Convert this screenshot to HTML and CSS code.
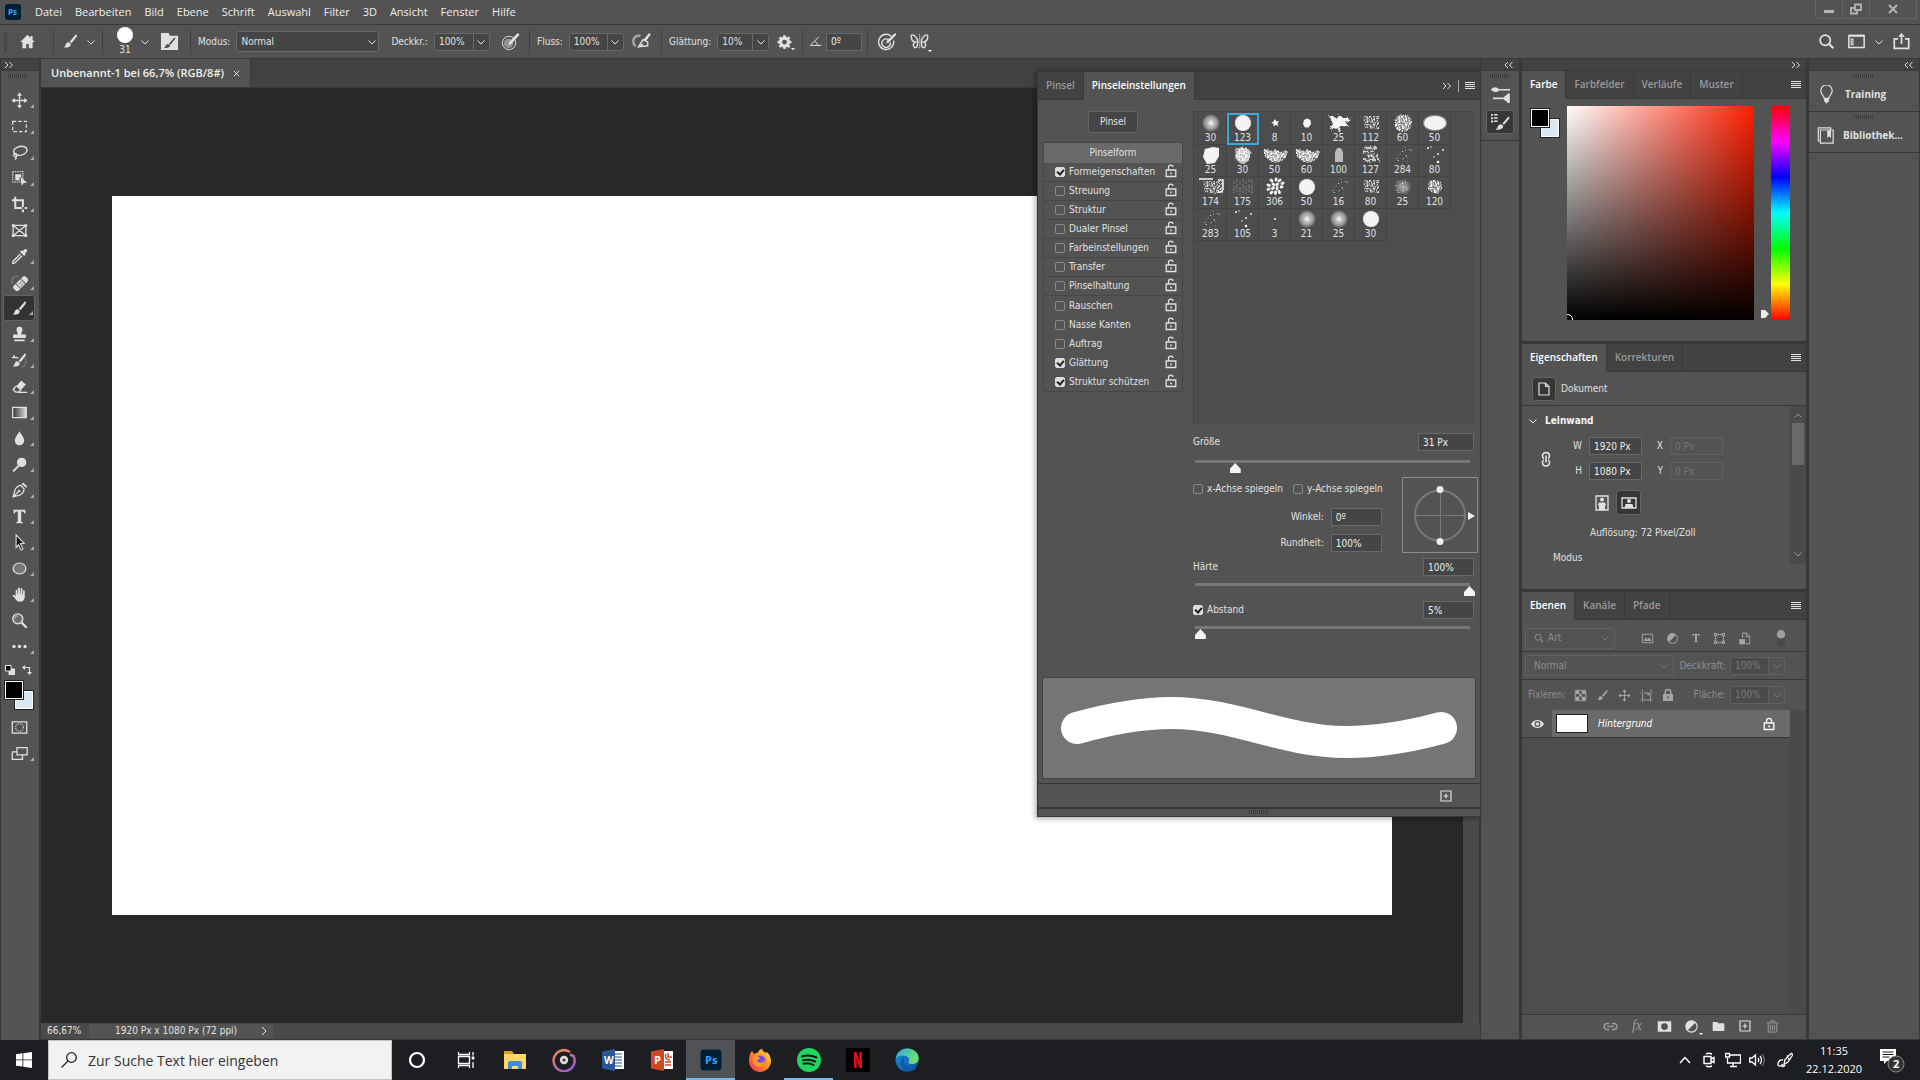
FILE: index.html
```html
<!DOCTYPE html>
<html lang="de">
<head>
  <meta charset="UTF-8">
  <title>Unbenannt-1 bei 66,7% (RGB/8#)</title>
  <meta name="viewport" content="width=device-width, initial-scale=1.0">
  <link rel="stylesheet" href="styles.css">
</head>
<body>
  <svg class="sprite" aria-hidden="true">
    <defs>
      <filter id="grain" x="-10%" y="-10%" width="120%" height="120%">
        <feTurbulence type="fractalNoise" baseFrequency=".6" numOctaves="2" seed="4"/>
        <feColorMatrix values="0 0 0 0 1  0 0 0 0 1  0 0 0 0 1  0 5 0 0 -2.1"/>
        <feComposite in2="SourceGraphic" operator="in"/>
      </filter>
      <filter id="specks" x="-10%" y="-10%" width="120%" height="120%">
        <feTurbulence type="fractalNoise" baseFrequency=".6" numOctaves="1" seed="9"/>
        <feColorMatrix values="0 0 0 0 1  0 0 0 0 1  0 0 0 0 1  0 7 0 0 -4.300"/>
        <feComposite in2="SourceGraphic" operator="in"/>
      </filter>
      <filter id="rough" x="-20%" y="-20%" width="140%" height="140%">
        <feTurbulence type="fractalNoise" baseFrequency=".3" numOctaves="2" seed="2"/>
        <feDisplacementMap in="SourceGraphic" scale="5"/>
      </filter>
      <radialGradient id="softDot"><stop offset="0" stop-color="#fff"/><stop offset=".4" stop-color="#b4b4b4"/><stop offset="1" stop-color="#fff" stop-opacity="0"/></radialGradient>
      <linearGradient id="ramp"><stop offset="0" stop-color="#333"/><stop offset="1" stop-color="#ddd"/></linearGradient>
      <linearGradient id="grooveRing" x2=".6" y2="1"><stop offset="0" stop-color="#f58a4b"/><stop offset="1" stop-color="#a05cc8"/></linearGradient>
      <linearGradient id="foxBody" x1="1" x2="0" y2="1"><stop offset="0" stop-color="#ffe84a"/><stop offset=".5" stop-color="#ff8a1e"/><stop offset="1" stop-color="#f0256c"/></linearGradient>
      <linearGradient id="edgeTop" y2=".4"><stop offset="0" stop-color="#2fa9e8"/><stop offset="1" stop-color="#6be06a"/></linearGradient>
      <linearGradient id="edgeLow" y2="1"><stop offset="0" stop-color="#1a8fd8"/><stop offset="1" stop-color="#0c4fa0"/></linearGradient>
    </defs>

    <symbol id="chev" viewBox="0 0 10 10"><path class="ln" d="M1.500 3.500 5 7l3.500-3.500"/></symbol>
    <symbol id="menu" viewBox="0 0 10 10"><path class="ln" d="M0 1.500h10M0 3.500h10M0 5.500h10M0 7.500h10" shape-rendering="crispEdges"/></symbol>
    <symbol id="dbl-right" viewBox="0 0 10 10"><path class="ln" d="m1 2 3 3-3 3M5.500 2l3 3-3 3"/></symbol>
    <symbol id="dbl-left" viewBox="0 0 10 10"><path class="ln" d="M4 2 1 5l3 3M8.500 2l-3 3 3 3"/></symbol>
    <symbol id="brush" viewBox="0 0 20 20"><path d="M17 2c1 .6.6 1.700 0 2.600L11.200 12 9 10.200l6-7c.6-.7 1.300-1.600 2-1.200z"/><path d="m8 11 2.300 1.900c.2 2.400-1.700 4.300-6.300 4.200-.9 0-1.700-.3-2-.7 1.600-.4 2-1.400 2.300-2.700C4.700 11.800 6.300 10.600 8 11z"/></symbol>
    <symbol id="home" viewBox="0 0 20 20"><path d="M10 2 1.500 10.500H4V18h4.500v-5h3v5H16v-7.500h2.500L16 8V3.500h-2.500v2z"/></symbol>
    <symbol id="brush-panel" viewBox="0 0 20 20"><path fill-rule="evenodd" d="M1 1h8l1.500 3H19v15H1zM16 6c-.6-.3-1 0-1.500.6L9.500 12l1.700 1.400 4.700-6c.4-.6.600-1.100.1-1.400zM8.800 12.600c-1.500-.3-2.600.8-2.900 2-.2.900-.5 1.600-1.900 2 3.500.9 6.600 0 6.600-2.600z"/></symbol>
    <symbol id="pen-pressure" viewBox="0 0 20 20"><circle class="ln" cx="8.500" cy="11.500" r="7"/><circle cx="8" cy="12" r="5" opacity=".45"/><path d="m17.500 1 2 2-8.700 9.500-3.300 1.300 1.200-3.400z"/></symbol>
    <symbol id="airbrush" viewBox="0 0 20 20"><path class="ln" stroke-width="2.500" d="M9 4C0 3 0 12 4 15" opacity=".6"/><path class="ln" stroke-width="1.500" d="m7 15.500 4.500-7.500 5 2.500v4zM15 8l3-5"/><path d="m18 1 1.800 1.500-6 7.500-2-1.500zM5 17l6-5 1 2z"/></symbol>
    <symbol id="gear" viewBox="0 0 20 20"><path fill-rule="evenodd" d="M8.500 1.500h3l.5 2.300 1.500.7 2-1.300 2.200 2.100-1.400 2.100.6 1.400 2.300.5v3l-2.300.5-.7 1.500 1.400 2-2.100 2.200-2-1.400-1.500.6-.5 2.300h-3L8 17.700l-1.500-.7-2 1.400-2.100-2.200 1.300-2-.6-1.400-2.300-.5v-3l2.300-.5.600-1.500-1.300-2 2.100-2.100 2 1.300L8 3.800zM10 7.500a3.200 3.200 0 1 0 0 6.500 3.200 3.200 0 0 0 0-6.500z"/></symbol>
    <symbol id="angle" viewBox="0 0 20 20"><path class="ln" stroke-width="1.500" d="M15 3 2 16h17M8 10c3 0 5 3 5 6"/></symbol>
    <symbol id="target" viewBox="0 0 20 20"><g class="ln" stroke-width="1.500"><path d="M14 4.500A8 8 0 1 0 16.500 9"/><path d="M11 8a4.500 4.500 0 1 0 2 3"/></g><path d="m18 1 1.500 1.500-8 8.500-3 1 1-3z"/></symbol>
    <symbol id="butterfly" viewBox="0 0 20 20"><g class="ln" stroke-width="1.500"><path d="M8 9C7 5 3 2 1.500 3.500c-.5 4 1 6.500 4 7C2 12 4 17 6 16.500S8 13 8 11zM12 9c1-4 5-7 6.500-5.500.5 4-1 6.500-4 7 3.500 1.500 1.500 6.500-.5 6s-2-3.500-2-5.500z"/><path stroke-dasharray="1 1" d="M10 2v16"/></g></symbol>
    <symbol id="search" viewBox="0 0 20 20"><circle class="ln" stroke-width="2" cx="8.500" cy="8.500" r="6"/><path class="ln" stroke-width="2.500" d="m13 13 5 5"/></symbol>
    <symbol id="workspace" viewBox="0 0 20 20"><path class="ln" stroke-width="1.800" d="M1 3h18v14H1z"/><path d="M1 2h18v2.500H1zM3 6.500h3.500v8H3z"/><path d="M4 8h1.500v1H4zm0 2h1.500v1H4zm0 2h1.500v1H4z" fill="#535353"/></symbol>
    <symbol id="share" viewBox="0 0 20 20"><path class="ln" stroke-width="2" d="M6 7H1.500v11h17V7H14M10 13V3"/><path d="m10 0 4 4.500H6z"/></symbol>

    <symbol id="move" viewBox="0 0 20 20"><path class="ln" stroke-width="1.500" d="M10 3v14M3 10h14"/><path d="m10 .5 3 4H7zm0 19 3-4H7zM.5 10l4-3v6zm19 0-4-3v6z"/></symbol>
    <symbol id="marquee" viewBox="0 0 20 20"><path class="ln" stroke-width="1.500" stroke-dasharray="4 2.500" d="M2 4h16v12H2z"/></symbol>
    <symbol id="lasso" viewBox="0 0 20 20"><g class="ln" stroke-width="1.600"><ellipse cx="11" cy="8" rx="8" ry="5.200" transform="rotate(-12 11 8)"/><circle cx="5" cy="13" r="1.800"/><path d="M6 14.500c.5 1.500 0 3-1.500 3.500"/></g></symbol>
    <symbol id="objsel" viewBox="0 0 20 20"><path class="ln" stroke-width="1.500" stroke-dasharray="1.500 1.200" d="M2 2h12v12H2z"/><path d="M5 5h7v4l-2-1v4H5zM11 8l8 7-4 .3-2.500 3.200z"/></symbol>
    <symbol id="crop" viewBox="0 0 20 20"><path class="ln" stroke-width="2.400" d="M1 5h13v8M5 1v13h8M14 16v3M16 14h3"/></symbol>
    <symbol id="frame" viewBox="0 0 20 20"><path class="ln" stroke-width="1.500" d="M2.500 4h15v12h-15zl15 12m0-12-15 12"/><path d="M1 2.500h3v3H1zm15 0h3v3h-3zM1 14.500h3v3H1zm15 0h3v3h-3z"/></symbol>
    <symbol id="dropper" viewBox="0 0 20 20"><path class="ln" stroke-width="1.600" d="m11 7-8.500 8.500L2 18l2.500-.5L13 9"/><path d="M12 3.500c1-1 1.500-.5 2 0l2-2c1.500-1 4 1 2.800 2.800l-2.300 2c.5.700.8 1.200 0 2l-1 1-5-5z"/></symbol>
    <symbol id="heal" viewBox="0 0 20 20"><g transform="rotate(-45 11 11)"><rect x="1" y="7.500" width="20" height="8" rx="2.500"/><path fill="#535353" d="M6.500 7.500h1v8h-1zm8 0h1v8h-1zM9 9.500h1.200v1.200H9zm3 0h1.200v1.200H12zm-1.500 1.700h1.200v1.200h-1.200zM9 13h1.200v1.200H9zm3 0h1.200v1.200H12z"/></g><path class="ln" stroke-dasharray="1 1.300" d="M2 11C-1 4 5 1 9 3"/></symbol>
    <symbol id="stamp" viewBox="0 0 20 20"><path d="M10 1a3.500 3.500 0 0 1 3.500 3.500C13.500 7 12 7 12 10h5.500v4h-15v-4H8c0-3-1.500-3-1.500-5.500A3.500 3.500 0 0 1 10 1zM4 16h12v1.800H4z"/></symbol>
    <symbol id="history" viewBox="0 0 20 20"><use href="#brush"/><path d="m.5 7 4-4v3h4v1.500z"/><path class="ln" stroke-dasharray="1 1.500" d="M17 8c2 4 0 9-5 10"/></symbol>
    <symbol id="eraser" viewBox="0 0 20 20"><path d="m12 3 5.500 4.500-6 7L6 10z"/><path class="ln" stroke-width="1.500" d="m6.500 9-4 4.500 3 3H9l3-3M8 17h11"/></symbol>
    <symbol id="gradient" viewBox="0 0 20 20"><path class="ln" stroke-width="1.500" style="fill:url(#ramp)" d="M2 4h16v12H2z"/></symbol>
    <symbol id="drop" viewBox="0 0 20 20"><path d="M10 1.500c2 4 5.500 7 5.500 11a5.500 5.500 0 0 1-11 0c0-4 3.500-7 5.500-11z"/></symbol>
    <symbol id="dodge" viewBox="0 0 20 20"><circle cx="12.500" cy="7.500" r="5.500"/><path class="ln" stroke-width="2.200" d="M9 11.500 2.500 18"/></symbol>
    <symbol id="pen" viewBox="0 0 20 20"><path class="ln" stroke-width="1.500" d="M12 4c-4 .5-6.500 2.500-7.500 6L2.500 17.500 10 15.500c3.500-1 5-4 5.500-7zM3 17l6-6"/><circle cx="9.500" cy="10.500" r="1.500"/><path d="m12.500 2 2-1 4.500 4-1 2.200z"/></symbol>
    <symbol id="type" viewBox="0 0 20 20"><path d="M3 2h14v4.500h-1.500c0-2-1-2.500-3.500-2.500v11.500c0 .8.500 1 2 1.200V18H6v-1.300c1.500-.2 2-.4 2-1.200V4c-2.500 0-3.500.5-3.500 2.500H3z"/></symbol>
    <symbol id="arrow" viewBox="0 0 20 20"><path d="m6 1 9.500 10-4.500.5 3 6-2.300 1.200-2.900-6L6 16z" fill="#111" stroke="currentColor" stroke-width="1.300"/></symbol>
    <symbol id="ellipse" viewBox="0 0 20 20"><ellipse cx="10" cy="10" rx="7.500" ry="6.500" fill="#777" stroke="currentColor" stroke-width="1.400"/></symbol>
    <symbol id="hand" viewBox="0 0 20 20"><path d="M5.500 12V5a1 1 0 0 1 2 0v4h.8V3a1.100 1.100 0 0 1 2.200 0v6h.8V3.500a1 1 0 0 1 2.100 0V10h.8V6a1 1 0 0 1 2 0v7c0 3-2 5.500-5.200 5.500-3.500 0-5-1.500-6.300-4L1.500 11c1-1.200 2.600-.6 4 1z"/></symbol>
    <symbol id="zoomer" viewBox="0 0 20 20"><circle cx="8" cy="8" r="5.800" fill="#6a6a6a" stroke="currentColor" stroke-width="1.700"/><path class="ln" d="M4.500 8C4.500 5.500 6 4.500 8 4.500"/><path class="ln" stroke-width="2.600" d="m12.500 12.500 6 6"/></symbol>
    <symbol id="more" viewBox="0 0 20 20"><circle cx="3.500" cy="10" r="2"/><circle cx="10" cy="10" r="2"/><circle cx="16.500" cy="10" r="2"/></symbol>
    <symbol id="reset-col" viewBox="0 0 10 10"><path d="M3.500 3.500H10V10H3.500z"/><path fill="#000" stroke="#eee" d="M.5.500H6V6H.5z"/></symbol>
    <symbol id="swap" viewBox="0 0 10 10"><path class="ln" stroke-width="1.200" d="M2 2.500h5.500V8"/><path d="M0 2.500 3 0v5zM7.500 10 5 7h5z"/></symbol>
    <symbol id="quickmask" viewBox="0 0 20 20"><path class="ln" stroke-width="1.500" d="M1.500 3.500h17v13h-17z"/><circle class="ln" stroke-width="1.300" stroke-dasharray="1.200 1.200" cx="10" cy="10" r="4.500"/></symbol>
    <symbol id="screens" viewBox="0 0 20 20"><path class="ln" stroke-width="1.500" d="M7 3h12v8.500H7zM7 8H1.500v9h12v-5"/></symbol>

    <symbol id="unlock" viewBox="0 0 12 14"><path class="ln" stroke-width="1.300" d="M1.200 6h9.600v6.500H1.200zM3.500 6V3.500C3.500.5 8 .5 8 3"/><path d="M5.200 8.500h1.600v1.800H5.200z"/></symbol>
    <symbol id="lock" viewBox="0 0 12 14"><path class="ln" stroke-width="1.300" d="M1.200 6h9.600v6.500H1.200zM3.500 6V4C3.500.6 8.500.6 8.500 4v2"/><path d="M5.200 8.500h1.600v1.800H5.200z"/></symbol>
    <symbol id="lock-full" viewBox="0 0 12 14"><path d="M1 6h10v7H1z"/><path class="ln" stroke-width="1.500" d="M3.300 6V4c0-3.400 5.400-3.400 5.400 0v2"/><path fill="#535353" d="M5.200 8.500h1.600v1.800H5.200z"/></symbol>
    <symbol id="plus-box" viewBox="0 0 12 12"><path class="ln" stroke-width="1.200" d="M1 1h10v10H1zM6 3.500v5M3.500 6h5"/></symbol>
    <symbol id="mixer" viewBox="0 0 20 20"><path class="ln" stroke-width="1.800" d="M8 5h12M2 14h11"/><path d="M0 5c2-3 5-3 7-1.800L9 5 7 7c-2.500 1-5 0-7-2zM13 14c0-2 4-3 4.500-5h2.300v10h-2.300C17 17 13 16 13 14z"/></symbol>
    <symbol id="brush-list" viewBox="0 0 20 20"><path d="M0 1h2v2H0zm3 0h4v1.500H3zM0 4.500h2v2H0zm3 0h4V6H3zM0 8h2v2H0zm3 0h4v1.500H3z"/><path d="M19 4c.8.500.6 1.400 0 2l-5.300 6.300L12 11l5.500-6.300c.500-.600 1-1 1.500-.7zM11 12l1.900 1.500c0 3-2.500 4.500-8.400 4 1.600-.5 2-1.500 2.500-2.900C7.500 12.500 9.500 11.600 11 12z"/></symbol>
    <symbol id="bulb" viewBox="0 0 20 20"><path class="ln" stroke-width="1.300" d="M7.500 14c0-3-3.500-4-3.500-8a6 6 0 0 1 12 0c0 4-3.500 5-3.500 8z"/><path d="M7.500 14h5v3L10 19.500 7.500 17z"/></symbol>
    <symbol id="library" viewBox="0 0 20 20"><path class="ln" stroke-width="1.400" d="M4 3.500h15V19H4zM4 16.500H1.500V1H16v2.500"/><path d="M12 4h4.500v9l-2.200-2L12 13z"/></symbol>
    <symbol id="page" viewBox="0 0 12 14"><path class="ln" stroke-width="1.200" d="M1 1h6.500L11 4.500V13H1zM7.500 1v3.500H11"/></symbol>
    <symbol id="chain" viewBox="0 0 10 16"><path class="ln" stroke-width="1.600" d="M3 7.500C1.500 7 1.500 6 1.500 5 1.500.5 8.500.5 8.500 5c0 1 0 2-1.500 2.500M3 9c-1.500.5-1.500 1.500-1.500 2.500 0 4.500 7 4.500 7 0 0-1 0-2-1.500-2.500M5 4.500v7"/></symbol>
    <symbol id="portrait" viewBox="0 0 14 16"><path class="ln" stroke-width="1.300" d="M1 1h12v14H1z"/><circle cx="7" cy="4.500" r="2"/><path d="M4 7.500h6l1 2.500-1 1v4H4v-4l-1-1z"/></symbol>
    <symbol id="landscape" viewBox="0 0 16 12"><path class="ln" stroke-width="1.300" d="M1 1h14v10H1z"/><circle cx="8" cy="4" r="2"/><path d="M4.500 7h7l1 4h-9z"/></symbol>
    <symbol id="f-image" viewBox="0 0 20 20"><path class="ln" stroke-width="1.500" d="M2 3.500h16v13H2z"/><path d="m4 14 3.500-6 2.500 4 2.500-3.500L16 14z"/></symbol>
    <symbol id="f-adjust" viewBox="0 0 20 20"><circle class="ln" stroke-width="1.500" cx="10" cy="10" r="7.500"/><path d="M15.300 4.700A7.500 7.500 0 1 0 4.700 15.300z"/></symbol>
    <symbol id="f-shape" viewBox="0 0 20 20"><path class="ln" stroke-width="1.400" d="M4 4h12v12H4z"/><path d="M1.500 1.500h5v5h-5zm12 0h5v5h-5zm-12 12h5v5h-5zm12 0h5v5h-5z"/><path fill="#535353" d="M3 3h2v2H3zm12 0h2v2h-2zM3 15h2v2H3zm12 0h2v2h-2z"/></symbol>
    <symbol id="f-smart" viewBox="0 0 20 20"><path class="ln" stroke-width="1.500" d="M7 9V1.500h6L18 6v12h-6M12.500 1.500V7H18"/><path d="M2 11h9v8H2z"/></symbol>
    <symbol id="l-pixels" viewBox="0 0 20 20"><path class="ln" stroke-width="1.500" d="M2 2h16v16H2z"/><path d="M3 3h5v4.500H3zM12 3h5v4.500h-5zM8 7.500h4V12H8zM3 12h5v5H3zm9 0h5v5h-5z"/></symbol>
    <symbol id="l-artboard" viewBox="0 0 20 20"><path class="ln" stroke-width="1.400" d="M4 1v3m0 2v11h12V9l-4-3H6M1 6h2m12 0h4M17 1v3M1 17h2m14 0h2M4 18v2m12-2v2M12 6v3h4"/></symbol>
    <symbol id="eye" viewBox="0 0 20 14"><path fill-rule="evenodd" d="M0 7c5-8 15-8 20 0-5 8-15 8-20 0zm10-4.500a4.500 4.500 0 1 0 0 9 4.500 4.500 0 0 0 0-9z"/><circle cx="10" cy="7" r="2.700"/></symbol>
    <symbol id="link" viewBox="0 0 20 20"><path class="ln" stroke-width="1.800" d="M8.500 6.500H6a3.500 3.500 0 0 0 0 7h2.500m3-7H14a3.500 3.500 0 0 1 0 7h-2.500M6 10h8"/></symbol>
    <symbol id="mask" viewBox="0 0 20 20"><path fill-rule="evenodd" d="M1 3h18v14H1zm9 2.500a4.500 4.500 0 1 0 0 9 4.500 4.500 0 0 0 0-9z"/></symbol>
    <symbol id="folder" viewBox="0 0 20 20"><path d="M1 3h7l1.500 2H19v12H1z"/></symbol>
    <symbol id="trash" viewBox="0 0 20 20"><path class="ln" stroke-width="1.500" d="M1 4.500h18M7 4V1.500h6V4M3.500 5v13.500h13V5M7 7.500V16m3-8.500V16m3-8.500V16"/></symbol>

    <symbol id="tip-soft" viewBox="0 0 28 20"><circle cx="14" cy="10" r="9" fill="url(#softDot)"/></symbol>
    <symbol id="tip-hard" viewBox="0 0 28 20"><circle cx="14" cy="10" r="8"/></symbol>
    <symbol id="tip-tiny" viewBox="0 0 28 20"><path d="m14 6 1.500 2.500L18 8l-1.500 2.500 1 2.500-3-1-2 1.500v-3L10 10l2.500-1.500z"/></symbol>
    <symbol id="tip-blob" viewBox="0 0 28 20"><path d="m11 7 3-1.500L17.500 7l.5 4-2.500 3.500H12L10 11z"/></symbol>
    <symbol id="tip-star" viewBox="0 0 28 20"><path filter="url(#rough)" d="m4 3 8 2 3-3 3 3 8 0-5 4 3 5-7-1-4 6-1-5-8 3 4-6z"/></symbol>
    <symbol id="tip-grain" viewBox="0 0 28 20"><path filter="url(#grain)" opacity=".8" d="M6 3h16v13L8 15z"/></symbol>
    <symbol id="tip-round" viewBox="0 0 28 20"><circle filter="url(#grain)" cx="14" cy="10" r="9"/><circle cx="14" cy="10" r="8" opacity=".3"/></symbol>
    <symbol id="tip-clump" viewBox="0 0 28 20"><path filter="url(#grain)" d="m8 4 6-1 6 2 1 6-4 6-5-1-5-4z"/><path opacity=".25" d="m8 4 6-1 6 2 1 6-4 6-5-1-5-4z"/></symbol>
    <symbol id="tip-oval" viewBox="0 0 28 20"><ellipse cx="14" cy="10" rx="12" ry="8" opacity=".4"/><ellipse cx="14" cy="10" rx="11" ry="7"/></symbol>
    <symbol id="tip-rock" viewBox="0 0 28 20"><path d="m8 4 8-2 6 1v8l-4 7-8 1-4-7z"/></symbol>
    <symbol id="tip-sponge" viewBox="0 0 28 20"><circle cx="14" cy="10" r="8" opacity=".7" filter="url(#rough)"/><circle cx="14" cy="10" r="7" filter="url(#grain)"/></symbol>
    <symbol id="tip-leaf" viewBox="0 0 28 20"><path opacity=".5" filter="url(#rough)" d="m3 4 9 2 3-2 4 3 8-1-3 7-8 4-5-1-6-4z"/><path filter="url(#grain)" d="m2 4 10 2 3-2 4 3 8-1-3 8-8 4-5-1-7-5z"/></symbol>
    <symbol id="tip-finger" viewBox="0 0 28 20"><path opacity=".65" d="M10 17V8c1-7 7-7 8 0v9z"/></symbol>
    <symbol id="tip-hatch" viewBox="0 0 28 20"><path class="ln" stroke-width="2.500" stroke-dasharray="7 1 4 2" opacity=".75" filter="url(#rough)" d="M8 3h13M5 7h14M10 11h14M7 15h16"/></symbol>
    <symbol id="tip-dust" viewBox="0 0 28 20"><path filter="url(#specks)" opacity=".8" d="M14 1h9v10l-6 8-12-2 1-6z"/></symbol>
    <symbol id="tip-drops" viewBox="0 0 28 20"><circle cx="7" cy="3" r="1"/><circle cx="10" cy="2" r=".7"/><circle cx="22" cy="5" r="1"/><circle cx="17" cy="9" r=".9"/><circle cx="13" cy="12" r=".7"/><circle cx="17" cy="17" r="1.300"/></symbol>
    <symbol id="tip-swirl" viewBox="0 0 28 20"><path filter="url(#grain)" opacity=".8" d="M6 4h20v12l-6 1L8 15z"/><path class="ln" stroke-width="1.500" d="M2 2h14m5 1h5v9c-1 4-5 4-5 1"/></symbol>
    <symbol id="tip-rain" viewBox="0 0 28 20"><path class="ln" stroke-dasharray="3 2 5 1" opacity=".3" d="M5 4v12M8 2v13M11 5v13M14 2v15M17 4v13M20 2v13M23 3v14"/></symbol>
    <symbol id="tip-petals" viewBox="0 0 28 20"><g class="ln" stroke-width="2.800" stroke-linecap="round"><path d="m10 3 1 1M15 2v1M19 3l-1 1M22 6l-1 .5M7 8l1.500.5M12 7l1 .5M16.500 7l-.5 1M20 10h1M7 12.500l1-.5M11.500 11.500l1-1M16 12v-1M10 16l1-1M14.500 16.500V15M18.500 15.500l-.5-1"/></g></symbol>
    <symbol id="tip-point" viewBox="0 0 28 20"><circle cx="14" cy="10" r="1"/></symbol>
    <symbol id="tip-mist" viewBox="0 0 28 20"><circle cx="14" cy="10" r="8" fill="url(#softDot)" opacity=".6"/><circle filter="url(#specks)" cx="14" cy="10" r="8"/></symbol>
  </svg>

  <header class="menubar">
    <svg class="ps-logo" viewBox="0 0 16 16"><rect width="16" height="16" rx="3" fill="#001e36"/><text x="3" y="11" font-size="8">Ps</text></svg>
    <nav class="menus">
      <a href="#">Datei</a>
      <a href="#">Bearbeiten</a>
      <a href="#">Bild</a>
      <a href="#">Ebene</a>
      <a href="#">Schrift</a>
      <a href="#">Auswahl</a>
      <a href="#">Filter</a>
      <a href="#">3D</a>
      <a href="#">Ansicht</a>
      <a href="#">Fenster</a>
      <a href="#">Hilfe</a>
    </nav>
    <div class="window-buttons">
      <button aria-label="Minimieren"><svg viewBox="0 0 12 12"><path d="M1 7h10v3H1z"/></svg></button>
      <button aria-label="Verkleinern"><svg viewBox="0 0 12 12"><path class="ln" stroke-width="1.800" d="M5 1.500h6v5.500H5zM4 5H1v5.500h6V8"/></svg></button>
      <button aria-label="Schließen"><svg viewBox="0 0 12 12"><path class="ln" stroke-width="2" d="m2 2 8 8m0-8-8 8"/></svg></button>
    </div>
  </header>

  <div class="options">
    <div class="opt opt-home"><span class="grip-v"></span><button aria-label="Startseite"><svg class="ic"><use href="#home"/></svg></button></div>
    <div class="opt opt-tool"><button aria-label="Pinselwerkzeug"><svg class="ic"><use href="#brush"/></svg></button><svg class="chev"><use href="#chev"/></svg></div>
    <div class="opt opt-preset">
      <button class="preset" aria-label="Pinselvorgabe"><i class="dot"></i><span>31</span></button>
      <svg class="chev"><use href="#chev"/></svg>
      <button aria-label="Pinselbedienfeld"><svg class="ic-lg"><use href="#brush-panel"/></svg></button>
    </div>
    <div class="opt opt-mode">
      <label for="mode">Modus:</label>
      <span class="select"><select id="mode"><option>Normal</option></select><svg class="chev"><use href="#chev"/></svg></span>
      <label for="opacity">Deckkr.:</label>
      <span class="combo"><input id="opacity" value="100%"><button aria-label="Deckkraft"><svg class="chev"><use href="#chev"/></svg></button></span>
      <button class="push" aria-label="Druck Deckkraft"><svg class="ic-lg"><use href="#pen-pressure"/></svg></button>
    </div>
    <div class="opt opt-flow">
      <label for="flow">Fluss:</label>
      <span class="combo"><input id="flow" value="100%"><button aria-label="Fluss"><svg class="chev"><use href="#chev"/></svg></button></span>
      <button class="push" aria-label="Airbrush"><svg class="ic-lg"><use href="#airbrush"/></svg></button>
    </div>
    <div class="opt opt-smooth">
      <label for="smooth">Glättung:</label>
      <span class="combo"><input id="smooth" value="10%"><button aria-label="Glättung"><svg class="chev"><use href="#chev"/></svg></button></span>
      <button class="push corner" aria-label="Glättungsoptionen"><svg class="ic-md"><use href="#gear"/></svg></button>
    </div>
    <div class="opt opt-angle">
      <label for="angle-in"><svg class="ic-sm"><use href="#angle"/></svg></label>
      <input class="field" id="angle-in" aria-label="Winkel" value="0º">
    </div>
    <div class="opt opt-end">
      <button aria-label="Druck Größe"><svg class="ic-lg"><use href="#target"/></svg></button>
      <button class="corner" aria-label="Symmetrie"><svg class="ic-lg"><use href="#butterfly"/></svg></button>
    </div>
    <div class="opt-right">
      <button aria-label="Suchen"><svg class="ic"><use href="#search"/></svg></button>
      <button aria-label="Arbeitsbereich"><svg class="ic"><use href="#workspace"/></svg></button>
      <svg class="chev"><use href="#chev"/></svg>
      <button aria-label="Teilen"><svg class="ic"><use href="#share"/></svg></button>
    </div>
  </div>

  <main class="workspace">
    <aside class="toolbar">
      <div class="strip strip-left"><svg class="chev"><use href="#dbl-right"/></svg></div>
      <div class="grip"></div>
      <div class="tools">
        <button class="tool" aria-label="Verschieben"><svg class="ic"><use href="#move"/></svg></button>
        <button class="tool" aria-label="Auswahlrechteck"><svg class="ic"><use href="#marquee"/></svg></button>
        <button class="tool" aria-label="Lasso"><svg class="ic"><use href="#lasso"/></svg></button>
        <button class="tool" aria-label="Objektauswahl"><svg class="ic"><use href="#objsel"/></svg></button>
        <button class="tool" aria-label="Freistellen"><svg class="ic"><use href="#crop"/></svg></button>
        <button class="tool single" aria-label="Rahmen"><svg class="ic"><use href="#frame"/></svg></button>
        <button class="tool" aria-label="Pipette"><svg class="ic"><use href="#dropper"/></svg></button>
        <button class="tool" aria-label="Reparaturpinsel"><svg class="ic"><use href="#heal"/></svg></button>
        <button class="tool active" aria-label="Pinsel"><svg class="ic"><use href="#brush"/></svg></button>
        <button class="tool" aria-label="Stempel"><svg class="ic"><use href="#stamp"/></svg></button>
        <button class="tool" aria-label="Protokollpinsel"><svg class="ic"><use href="#history"/></svg></button>
        <button class="tool" aria-label="Radiergummi"><svg class="ic"><use href="#eraser"/></svg></button>
        <button class="tool" aria-label="Verlauf"><svg class="ic"><use href="#gradient"/></svg></button>
        <button class="tool" aria-label="Weichzeichner"><svg class="ic"><use href="#drop"/></svg></button>
        <button class="tool" aria-label="Abwedler"><svg class="ic"><use href="#dodge"/></svg></button>
        <button class="tool" aria-label="Zeichenstift"><svg class="ic"><use href="#pen"/></svg></button>
        <button class="tool" aria-label="Text"><svg class="ic"><use href="#type"/></svg></button>
        <button class="tool" aria-label="Pfadauswahl"><svg class="ic"><use href="#arrow"/></svg></button>
        <button class="tool" aria-label="Ellipse"><svg class="ic"><use href="#ellipse"/></svg></button>
        <button class="tool" aria-label="Hand"><svg class="ic"><use href="#hand"/></svg></button>
        <button class="tool single" aria-label="Zoom"><svg class="ic"><use href="#zoomer"/></svg></button>
        <button class="tool" aria-label="Mehr"><svg class="ic"><use href="#more"/></svg></button>
      </div>
      <div class="mini"><svg class="chev"><use href="#reset-col"/></svg><svg class="chev"><use href="#swap"/></svg></div>
      <div class="swatches"><i class="back"></i><i class="fore"></i></div>
      <div class="tools">
        <button class="tool single" aria-label="Maskierungsmodus"><svg class="ic"><use href="#quickmask"/></svg></button>
        <button class="tool" aria-label="Bildschirmmodus"><svg class="ic"><use href="#screens"/></svg></button>
      </div>
    </aside>

    <section class="document">
      <div class="doc-tabs">
        <div class="doc-tab">Unbenannt-1 bei 66,7% (RGB/8#)<button aria-label="Schließen"><svg viewBox="0 0 8 8"><path class="ln" d="m1 1 6 6m0-6-6 6"/></svg></button></div>
      </div>
      <div class="stage">
        <div class="pasteboard"><div class="artboard"></div></div>
        <div class="scroll-v"></div>
      </div>
      <footer class="status">
        <span class="zoom">66,67%</span>
        <span class="info">1920 Px x 1080 Px (72 ppi)<svg viewBox="0 0 6 10"><path class="ln" d="m1 1 4 4-4 4"/></svg></span>
      </footer>

      <div class="brush-window">
        <div class="tabs">
          <button class="tab">Pinsel</button>
          <button class="tab on">Pinseleinstellungen</button>
          <span class="tab-tools"><svg class="chev"><use href="#dbl-right"/></svg><i class="bar"></i><svg class="chev"><use href="#menu"/></svg></span>
        </div>
        <div class="brush-body">
          <div class="brush-left">
            <button class="btn">Pinsel</button>
            <div class="features">
              <h3>Pinselform</h3>
              <div class="feature line"><label><input type="checkbox" checked>Formeigenschaften</label><svg class="lock"><use href="#unlock"/></svg></div>
              <div class="feature line"><label><input type="checkbox">Streuung</label><svg class="lock"><use href="#unlock"/></svg></div>
              <div class="feature line"><label><input type="checkbox">Struktur</label><svg class="lock"><use href="#unlock"/></svg></div>
              <div class="feature line"><label><input type="checkbox">Dualer Pinsel</label><svg class="lock"><use href="#unlock"/></svg></div>
              <div class="feature line"><label><input type="checkbox">Farbeinstellungen</label><svg class="lock"><use href="#unlock"/></svg></div>
              <div class="feature line"><label><input type="checkbox">Transfer</label><svg class="lock"><use href="#unlock"/></svg></div>
              <div class="feature line"><label><input type="checkbox">Pinselhaltung</label><svg class="lock"><use href="#unlock"/></svg></div>
              <div class="feature"><label><input type="checkbox">Rauschen</label><svg class="lock"><use href="#unlock"/></svg></div>
              <div class="feature"><label><input type="checkbox">Nasse Kanten</label><svg class="lock"><use href="#unlock"/></svg></div>
              <div class="feature"><label><input type="checkbox">Auftrag</label><svg class="lock"><use href="#unlock"/></svg></div>
              <div class="feature"><label><input type="checkbox" checked>Glättung</label><svg class="lock"><use href="#unlock"/></svg></div>
              <div class="feature"><label><input type="checkbox" checked>Struktur schützen</label><svg class="lock"><use href="#unlock"/></svg></div>
            </div>
          </div>
          <div class="brush-right">
            <div class="tips">
              <div class="tip-grid">
                <button class="tip"><svg><use href="#tip-soft"/></svg>30</button>
                <button class="tip picked"><svg><use href="#tip-hard"/></svg>123</button>
                <button class="tip"><svg><use href="#tip-tiny"/></svg>8</button>
                <button class="tip"><svg><use href="#tip-blob"/></svg>10</button>
                <button class="tip"><svg><use href="#tip-star"/></svg>25</button>
                <button class="tip"><svg><use href="#tip-grain"/></svg>112</button>
                <button class="tip"><svg><use href="#tip-round"/></svg>60</button>
                <button class="tip"><svg><use href="#tip-oval"/></svg>50</button>
                <button class="tip"><svg><use href="#tip-rock"/></svg>25</button>
                <button class="tip"><svg><use href="#tip-sponge"/></svg>30</button>
                <button class="tip"><svg><use href="#tip-leaf"/></svg>50</button>
                <button class="tip"><svg><use href="#tip-leaf"/></svg>60</button>
                <button class="tip"><svg><use href="#tip-finger"/></svg>100</button>
                <button class="tip"><svg><use href="#tip-hatch"/></svg>127</button>
                <button class="tip"><svg><use href="#tip-dust"/></svg>284</button>
                <button class="tip"><svg><use href="#tip-drops"/></svg>80</button>
                <button class="tip"><svg><use href="#tip-swirl"/></svg>174</button>
                <button class="tip"><svg><use href="#tip-rain"/></svg>175</button>
                <button class="tip"><svg><use href="#tip-petals"/></svg>306</button>
                <button class="tip"><svg><use href="#tip-hard"/></svg>50</button>
                <button class="tip"><svg><use href="#tip-dust"/></svg>16</button>
                <button class="tip"><svg><use href="#tip-grain"/></svg>80</button>
                <button class="tip"><svg><use href="#tip-mist"/></svg>25</button>
                <button class="tip"><svg><use href="#tip-clump"/></svg>120</button>
                <button class="tip"><svg><use href="#tip-dust"/></svg>283</button>
                <button class="tip"><svg><use href="#tip-drops"/></svg>105</button>
                <button class="tip"><svg><use href="#tip-point"/></svg>3</button>
                <button class="tip"><svg><use href="#tip-soft"/></svg>21</button>
                <button class="tip"><svg><use href="#tip-soft"/></svg>25</button>
                <button class="tip"><svg><use href="#tip-hard"/></svg>30</button>
              </div>
            </div>
            <div class="setting first"><label for="size">Größe</label><input class="field wide" id="size" value="31 Px"></div>
            <input class="slider" type="range" aria-label="Größe" min="0" max="1000" value="145">
            <div class="shape">
              <div class="shape-fields">
                <div class="flips">
                  <label><input type="checkbox">x-Achse spiegeln</label>
                  <label><input type="checkbox">y-Achse spiegeln</label>
                </div>
                <div class="angle-row"><label for="ang">Winkel:</label><input class="field" id="ang" value="0º"></div>
                <div class="angle-row"><label for="rnd">Rundheit:</label><input class="field" id="rnd" value="100%"></div>
              </div>
              <svg class="dial" viewBox="0 0 76 76">
                <path d="M.5.500h75v75H.5z" fill="none" stroke="#8c8c8c"/>
                <g fill="none" stroke="#787878"><circle cx="38" cy="38.500" r="25" stroke-width="2"/><path d="M13 38.500h50M38.500 13v51"/></g>
                <g fill="#eee"><circle cx="38" cy="12.500" r="3.500"/><circle cx="38" cy="64.500" r="3.500"/><path d="m66 35 7 4-7 4z"/></g>
              </svg>
            </div>
            <div class="setting"><label for="hard">Härte</label><input class="field" id="hard" value="100%"></div>
            <input class="slider" type="range" aria-label="Härte" min="0" max="100" value="100">
            <div class="setting gap"><label><input type="checkbox" checked>Abstand</label><input class="field" aria-label="Abstand" value="5%"></div>
            <input class="slider" type="range" aria-label="Abstand" min="0" max="1000" value="18">
          </div>
        </div>
        <div class="preview">
          <svg viewBox="0 0 432 100" preserveAspectRatio="none"><path d="M34 50C70 40 98 35 128 35C192 35 240 64 303 64C335 64 365 59 398 50" fill="none" stroke="#fff" stroke-width="32" stroke-linecap="round"/></svg>
        </div>
        <div class="brush-foot"><button aria-label="Neuer Pinsel"><svg class="plus"><use href="#plus-box"/></svg></button></div>
        <div class="resize"><i class="grip"></i></div>
      </div>
    </section>

    <aside class="dock dock-icons">
      <div class="strip"><svg class="chev"><use href="#dbl-left"/></svg></div>
      <div class="dock-group">
        <div class="grip"></div>
        <button aria-label="Pinsel"><svg class="ic-lg"><use href="#mixer"/></svg></button>
        <button class="pressed" aria-label="Pinseleinstellungen"><svg class="ic-lg"><use href="#brush-list"/></svg></button>
      </div>
    </aside>

    <aside class="dock dock-main">
      <div class="strip"><svg class="chev"><use href="#dbl-right"/></svg></div>

      <section class="panel color-panel">
        <div class="tabs">
          <button class="tab on">Farbe</button>
          <button class="tab">Farbfelder</button>
          <button class="tab">Verläufe</button>
          <button class="tab">Muster</button>
          <span class="tab-tools"><svg class="chev"><use href="#menu"/></svg></span>
        </div>
        <div class="picker">
          <div class="swatches"><i class="back"></i><i class="fore"></i></div>
          <div class="field-2d"><svg class="ring" viewBox="0 0 6 6"><path d="M0 .5A5 5 0 0 1 5.500 6" fill="none" stroke="#fff"/></svg></div>
          <input class="hue-pointer" type="range" aria-label="Farbton" min="0" max="100" value="1">
          <div class="hue"></div>
        </div>
      </section>

      <section class="panel props-panel">
        <div class="tabs">
          <button class="tab on">Eigenschaften</button>
          <button class="tab">Korrekturen</button>
          <span class="tab-tools"><svg class="chev"><use href="#menu"/></svg></span>
        </div>
        <div class="props-head"><span class="tile"><svg class="page"><use href="#page"/></svg></span>Dokument</div>
        <div class="props-scroll">
          <div class="props">
            <h3><svg class="chev"><use href="#chev"/></svg>Leinwand</h3>
            <div class="dims">
              <svg class="chain"><use href="#chain"/></svg>
              <label for="w">W</label><input class="field" id="w" value="1920 Px">
              <label for="x">X</label><input class="field" id="x" value="0 Px" disabled>
              <label for="h">H</label><input class="field" id="h" value="1080 Px">
              <label for="y">Y</label><input class="field" id="y" value="0 Px" disabled>
            </div>
            <div class="orient">
              <button aria-label="Hochformat"><svg width="14" height="16"><use href="#portrait"/></svg></button>
              <button class="pressed" aria-label="Querformat"><svg width="16" height="12"><use href="#landscape"/></svg></button>
            </div>
            <p class="res">Auflösung: 72 Pixel/Zoll</p>
            <p class="modus">Modus</p>
          </div>
          <div class="scrollbar"><svg class="chev up"><use href="#chev"/></svg><i></i><svg class="chev"><use href="#chev"/></svg></div>
        </div>
      </section>

      <section class="panel layers-panel">
        <div class="tabs">
          <button class="tab on">Ebenen</button>
          <button class="tab">Kanäle</button>
          <button class="tab">Pfade</button>
          <span class="tab-tools"><svg class="chev"><use href="#menu"/></svg></span>
        </div>
        <div class="lrow">
          <span class="select kind"><svg class="ic-xs"><use href="#search"/></svg><select aria-label="Filterart"><option>Art</option></select><svg class="chev"><use href="#chev"/></svg></span>
          <div class="filters">
            <svg class="ic-sm"><use href="#f-image"/></svg>
            <svg class="ic-sm"><use href="#f-adjust"/></svg>
            <svg class="ic-xs"><use href="#type"/></svg>
            <svg class="ic-sm"><use href="#f-shape"/></svg>
            <svg class="ic-sm"><use href="#f-smart"/></svg>
          </div>
          <span class="toggle"></span>
        </div>
        <div class="lrow">
          <span class="select blend"><select aria-label="Füllmethode"><option>Normal</option></select><svg class="chev"><use href="#chev"/></svg></span>
          <label for="lop">Deckkraft:</label>
          <span class="combo"><input id="lop" value="100%" disabled><button aria-label="Deckkraft" disabled><svg class="chev"><use href="#chev"/></svg></button></span>
        </div>
        <div class="lrow plain">
          <span class="fix">Fixieren:</span>
          <div class="locks">
            <svg class="ic-sm"><use href="#l-pixels"/></svg>
            <svg class="ic-sm"><use href="#brush"/></svg>
            <svg class="ic-sm"><use href="#move"/></svg>
            <svg class="ic-sm"><use href="#l-artboard"/></svg>
            <svg class="lock"><use href="#lock-full"/></svg>
          </div>
          <label for="lfill">Fläche:</label>
          <span class="combo"><input id="lfill" value="100%" disabled><button aria-label="Fläche" disabled><svg class="chev"><use href="#chev"/></svg></button></span>
        </div>
        <div class="layers">
          <div class="layer-list">
            <div class="layer">
              <button class="vis" aria-label="Sichtbarkeit"><svg viewBox="0 0 20 14"><use href="#eye"/></svg></button>
              <div class="layer-main"><i class="thumb"></i><em>Hintergrund</em><svg class="lock"><use href="#lock"/></svg></div>
            </div>
          </div>
          <div class="layer-scroll"></div>
        </div>
        <div class="layer-foot">
          <button class="dim" aria-label="Verknüpfen"><svg class="ic"><use href="#link"/></svg></button>
          <button class="dim fx" aria-label="Ebenenstil">fx</button>
          <button aria-label="Maske"><svg class="ic-md"><use href="#mask"/></svg></button>
          <button class="corner" aria-label="Einstellungsebene"><svg class="ic-md"><use href="#f-adjust"/></svg></button>
          <button aria-label="Gruppe"><svg class="ic-sm"><use href="#folder"/></svg></button>
          <button aria-label="Neue Ebene"><svg class="plus"><use href="#plus-box"/></svg></button>
          <button class="dim" aria-label="Löschen"><svg class="ic-sm"><use href="#trash"/></svg></button>
        </div>
      </section>
    </aside>

    <aside class="dock dock-side">
      <div class="strip"><svg class="chev"><use href="#dbl-left"/></svg></div>
      <div class="side-item"><i class="grip"></i><button><svg class="ic-lg"><use href="#bulb"/></svg>Training</button></div>
      <div class="side-item"><i class="grip"></i><button><svg class="ic"><use href="#library"/></svg>Bibliothek...</button></div>
    </aside>
  </main>

  <footer class="taskbar">
    <button class="start" aria-label="Start"><svg viewBox="0 0 16 16"><path d="m0 2.200 6.500-.9v6.200H0zm7.300-1L16 0v7.500H7.300zM0 8.300h6.500v6.300L0 13.700zm7.300 0H16V16l-8.700-1.300z"/></svg></button>
    <label class="find">
      <svg viewBox="0 0 16 16"><circle class="ln" stroke-width="1.300" cx="10.500" cy="5.500" r="4.800"/><path class="ln" stroke-width="1.300" d="M7 9 .5 15.500"/></svg>
      <input type="text" placeholder="Zur Suche Text hier eingeben" aria-label="Suche">
    </label>
    <nav class="apps">
      <button aria-label="Cortana"><svg viewBox="0 0 24 24"><circle class="ln" stroke-width="2.200" cx="12" cy="12" r="7"/></svg></button>
      <button aria-label="Taskansicht"><svg viewBox="0 0 24 24"><path class="ln" stroke-width="1.300" d="M4.500 8.500h11v7h-11zM4.500 4v2.500h11V4M4.500 20v-2.500h11V20M19 4v3.500M19 14v6"/><path d="M17.700 8.500h2.600v3h-2.600z"/></svg></button>
      <button aria-label="Explorer"><svg viewBox="0 0 24 24"><path fill="#d9a021" d="M1 3h8l2 3h12v5H1z"/><path fill="#ffd766" d="M1 6h22v15H1z"/><path fill="#3a8fd6" d="M5 21v-6c0-1 .5-2 2-2h10c1.500 0 2 1 2 2v6h-4v-3H9v3z"/></svg></button>
      <button aria-label="Groove"><svg viewBox="0 0 24 24"><path d="M18 4A10.500 10.500 0 1 0 21.500 8l-3.500-1.500" fill="none" stroke="url(#grooveRing)" stroke-width="2.500"/><circle cx="12" cy="12" r="4.200" fill="#ddd"/><circle cx="12" cy="12" r="1.500" fill="#333"/></svg></button>
      <button aria-label="Word"><svg viewBox="0 0 24 24"><path fill="#fff" d="M12 3h11v18H12z"/><path stroke="#2b579a" d="M13 6h8M13 9h8M13 12h8M13 15h8M13 18h8"/><path fill="#2b579a" d="M1 3.500 14 1v22L1 20.500z"/><text x="3" y="16" font-size="10" font-weight="bold">W</text></svg></button>
      <button aria-label="PowerPoint"><svg viewBox="0 0 24 24"><path fill="#fff" d="M12 3h11v18H12z"/><path stroke="#d24726" stroke-width="1.500" fill="none" d="M15 14h6M15 17h6M18 5v4h4M16 6a4 4 0 0 0 4 6"/><path fill="#d24726" d="M1 3.500 14 1v22L1 20.500z"/><text x="4" y="16" font-size="11" font-weight="bold">P</text></svg></button>
      <button class="current" aria-label="Photoshop"><svg viewBox="0 0 24 24"><rect x="1.500" y="1.500" width="21" height="21" rx="4" fill="#001e36"/><text x="6" y="16" font-size="11" class="ps">Ps</text></svg></button>
      <button aria-label="Firefox"><svg viewBox="0 0 24 24"><path fill="url(#foxBody)" d="M4 3c1 1 1 2 2 3 1-.8 2-1 3.500-1C10 3 12 2 14 .5c0 2 2 3 4 4.500l1-1c2 2 4 5 4 9a11 11 0 0 1-22 0C1 8.500 2 5 4 3z"/><circle cx="12.500" cy="12.500" r="5" fill="#7a4be0"/><path fill="#ff9a24" d="M5 9c3-1 5 0 7 .5 0 2-3 2-3 3.500 2 3 6 2 8-1 0 5-4 7-7 6.500C6 18 4 13 5 9z"/></svg></button>
      <button class="running" aria-label="Spotify"><svg viewBox="0 0 24 24"><circle cx="12" cy="12" r="12" fill="#1ed760"/><path d="M5 8.500c5-1.500 10-1 14.500 1M6 12.300c4-1 8.500-.7 12 1.200M6.500 15.800c3.500-.8 7-.5 10 1.200" fill="none" stroke="#191414" stroke-width="2" stroke-linecap="round"/></svg></button>
      <button aria-label="Netflix"><svg viewBox="0 0 24 24"><path d="M0 0h24v24H0z" fill="#000"/><path d="M8 4h2.700l2.600 9V4H16v16h-2.600l-2.700-9v9H8z" fill="#e50914"/></svg></button>
      <button aria-label="Edge"><svg viewBox="0 0 24 24"><circle cx="12" cy="12" r="11.500" fill="url(#edgeLow)"/><path fill="url(#edgeTop)" d="M.6 11C2 4 7 .5 12 .5c7 0 12 4.500 11.700 10.500-.2 3.500-3.500 5-6.700 5-2.500 0-4-.8-3.500-1.500 1.200-1.500 1.200-5-2.500-6.500C7 6.500 2 8 .6 11z"/><path fill="#0d5ba8" d="M9 9c-5 3-4 11 3 14 4 .8 8-1 10-4-6 2.500-12 0-13-4.500z"/></svg></button>
    </nav>
    <div class="tray">
      <svg viewBox="0 0 16 16"><path class="ln" stroke-width="1.500" d="m3 11 5-5.500L13 11"/></svg>
      <svg viewBox="0 0 16 16"><path class="ln" stroke-width="1.400" d="M3 4.500h7v7H3zM10 7l3-1.500v5L10 9M5 2c2-1 4-1 6 0M5 14c2 1 4 1 6 0"/></svg>
      <svg viewBox="0 0 16 16"><path class="ln" stroke-width="1.300" d="M5 3h10.500v8H2.500V6M8 11v3M5 14.500h7M.5 1.500h4V5h-4z"/></svg>
      <svg viewBox="0 0 16 16"><path class="ln" stroke-width="1.300" d="M.7 6H3l3.500-3v10L3 10H.700zM9 6c1 1 1 3 0 4M11 4c2 2 2 6 0 8"/><path class="ln" opacity=".5" d="M13 2c3 3.500 3 8.500 0 12"/></svg>
      <svg class="far" viewBox="0 0 16 16"><path class="ln" stroke-width="1.300" d="M6 8C1 7 0 13 2 14s4-3 3-1 2 2 3 0M14 1.500 8 7.500l-1 5 4-2.500 4-6c.8-1.500 0-3-1-2.500zM10 3.500l2 4"/></svg>
      <div class="clock"><time>11:35</time><time>22.12.2020</time></div>
      <button class="notes" aria-label="Benachrichtigungen"><svg viewBox="0 0 26 26"><path d="M1 2h16v12H8l-3 3v-3H1z"/><path stroke="#1c1d20" d="M3.500 5h11M3.500 7.500h11M3.500 10h7"/><circle cx="17" cy="17" r="8" fill="#333" stroke="#888"/><text x="14" y="21" font-size="11" font-weight="bold">2</text></svg></button>
    </div>
  </footer>
</body>
</html>
```

FILE: styles.css
```css
:root {
  --bg: #535353;
  --dark: #424242;
  --line: #383838;
  --text: #e0e0e0;
  --dim: #9a9a9a;
}

* {
  box-sizing: border-box;
}

html, body {
  margin: 0;
  padding: 0;
}

body {
  display: flex;
  flex-direction: column;
  min-height: 100vh;
  background: var(--bg);
  color: var(--text);
  font-family: 'DejaVu Sans Condensed', 'DejaVu Sans', sans-serif;
  font-size: 10px;
  line-height: 14px;
}

button {
  display: flex;
  align-items: center;
  justify-content: center;
  margin: 0;
  padding: 0;
  border: none;
  background: none;
  color: inherit;
  font: inherit;
}

input, select {
  margin: 0;
  font: inherit;
  color: inherit;
}

a {
  color: inherit;
  text-decoration: none;
}

h3, p {
  margin: 0;
}

i {
  display: block;
}

svg {
  display: block;
  flex: none;
  fill: currentColor;
}

.sprite {
  position: absolute;
  width: 0;
  height: 0;
}

.ln {
  fill: none;
  stroke: currentColor;
}

.chev, .ic-xs { width: 10px; height: 10px; }
.ic-sm { width: 13px; height: 13px; }
.ic-md { width: 15px; height: 15px; }
.ic { width: 17px; height: 17px; }
.ic-lg { width: 19px; height: 19px; }
.plus { width: 12px; height: 12px; }
.lock { width: 12px; height: 14px; }

.grip {
  width: 20px;
  height: 4px;
  margin: 0 auto;
  background: repeating-linear-gradient(to right, #3c3c3c 0 1px, transparent 1px 2px);
}

/* menu bar */

.menubar {
  display: flex;
  align-items: center;
  height: 25px;
  padding-left: 5px;
  border-bottom: 1px solid var(--line);
}

.ps-logo {
  width: 16px;
  height: 16px;
  font-family: 'Open Sans', sans-serif;
  font-weight: bold;
  fill: #31a8ff;
}

.menus {
  display: flex;
  gap: 13px;
  margin-left: 14px;
  font-family: 'Open Sans', sans-serif;
  font-size: 11px;
  color: #eee;
}

.window-buttons {
  display: flex;
  align-self: flex-start;
  height: 19px;
  margin: 0 3px 0 auto;
  border: 1px solid #666;
  border-top: none;
  border-radius: 0 0 3px 3px;
  color: #b4b4b4;
}

.window-buttons button {
  width: 27px;
  border-right: 1px solid #666;
}

.window-buttons button:last-child {
  width: 46px;
  border-right: none;
}

.window-buttons svg {
  width: 12px;
  height: 12px;
}

/* options bar */

.options {
  display: flex;
  align-items: center;
  height: 34px;
  border-bottom: 1px solid var(--line);
}

.opt {
  display: flex;
  align-items: center;
  height: 24px;
  border-right: 1px solid #404040;
}

.grip-v {
  width: 3px;
  height: 20px;
  margin: 0 12px 0 4px;
  background: repeating-linear-gradient(#3c3c3c 0 1px, transparent 1px 2px);
}

.opt-home { width: 54px; }
.opt-tool { width: 49px; padding-left: 8px; gap: 7px; }
.opt-preset { width: 88px; padding-left: 10px; gap: 3px; }
.opt-preset .ic-lg { margin-left: 7px; }
.opt-mode { width: 339px; padding-left: 7px; gap: 6px; }
.opt-flow, .opt-smooth { padding-left: 7px; gap: 6px; }
.opt-flow { width: 132px; }
.opt-smooth { width: 141px; }
.opt-angle { width: 65px; padding-left: 6px; gap: 4px; }
.opt-angle .field { width: 36px; }
.opt-end { border: none; padding-left: 10px; gap: 13px; }

.opt-mode .select { width: 143px; height: 21px; margin-right: 6px; padding-right: 1px; }
.opt-mode .push { margin-left: 5px; }
.push { margin-left: 2px; }

.preset {
  flex-direction: column;
  width: 24px;
}

.dot {
  width: 16px;
  height: 16px;
  border-radius: 50%;
  background: #fff;
}

.opt-right {
  display: flex;
  align-items: center;
  gap: 13px;
  margin: 0 10px 0 auto;
}

.opt-right .chev {
  margin: 0 -4px;
}

.corner {
  position: relative;
}

.corner::after {
  content: '';
  position: absolute;
  right: -3px;
  bottom: -1px;
  border: 2px solid transparent;
  border-top-color: #fff;
  border-bottom: none;
}

.select {
  display: flex;
  align-items: center;
  padding-right: 4px;
  border: 1px solid #686868;
  border-radius: 3px;
  background: #454545;
}

.select select {
  flex: 1;
  min-width: 0;
  height: 100%;
  padding: 0 0 0 4px;
  border: none;
  background: none;
  appearance: none;
}

.combo {
  display: flex;
  height: 18px;
  border: 1px solid #686868;
  border-radius: 3px;
  background: #454545;
}

.combo input {
  width: 37px;
  padding: 0 0 0 4px;
  border: none;
  background: none;
}

.opt-mode .combo input { width: 38px; }
.opt-smooth .combo input { width: 34px; }

.combo button {
  width: 16px;
  border-left: 1px solid #686868;
}

.field {
  width: 51px;
  height: 18px;
  padding: 0 4px;
  border: 1px solid #686868;
  background: #454545;
  color: #eee;
}

.field:disabled {
  border-color: #606060;
  background: none;
  color: #757575;
}

input[type="checkbox"] {
  appearance: none;
  flex: none;
  width: 10px;
  height: 10px;
  margin: 0 4px 0 0;
  border: 1px solid #8a8a8a;
  border-radius: 2px;
}

input[type="checkbox"]:checked {
  border-color: #ddd;
  background: #ddd;
}

input[type="checkbox"]:checked::before {
  content: '';
  display: block;
  width: 3px;
  height: 5px;
  margin: 0 auto;
  border: solid #222;
  border-width: 0 2px 2px 0;
  transform: rotate(40deg);
}

/* workspace */

.workspace {
  flex: 1;
  display: flex;
}

.strip {
  display: flex;
  align-items: center;
  justify-content: flex-end;
  height: 12px;
  padding-right: 5px;
  background: var(--dark);
  border-bottom: 1px solid var(--line);
}

.strip-left {
  justify-content: flex-start;
  padding-left: 3px;
}

.toolbar {
  width: 41px;
  border: solid var(--line);
  border-width: 0 2px 0 1px;
}

.toolbar > .grip {
  margin: 3px auto 9px 7px;
}

.tool {
  position: relative;
  width: 32px;
  height: 26px;
  margin-left: 2px;
}

.tool::after {
  content: '';
  position: absolute;
  right: 1px;
  bottom: 5px;
  border: 2px solid transparent;
  border-right-color: #aaa;
  border-bottom-color: #aaa;
}

.tool.single::after {
  display: none;
}

.tool.active {
  border: 1px solid #636363;
  border-radius: 3px;
  background: #333;
}

.mini {
  display: flex;
  gap: 7px;
  padding: 6px 0 5px 4px;
}

.swatches {
  display: grid;
  width: 30px;
  height: 30px;
}

.toolbar .swatches {
  margin: 0 0 4px 3px;
}

.swatches i {
  grid-area: 1 / 1;
  width: 20px;
  height: 20px;
  border: 1px solid #222;
  outline: 1px solid #fff;
  outline-offset: -2px;
}

.swatches .fore {
  background: #000;
  z-index: 1;
}

.swatches .back {
  place-self: end;
  background: #dbe7f1;
}

/* document */

.document {
  position: relative;
  flex: 1;
  display: flex;
  flex-direction: column;
  min-width: 0;
}

.doc-tabs {
  display: flex;
  height: 29px;
  background: var(--dark);
  border-bottom: 1px solid var(--line);
}

.doc-tab {
  display: flex;
  align-items: center;
  gap: 9px;
  padding: 0 10px;
  border-right: 1px solid var(--line);
  background: var(--bg);
  color: #f0f0f0;
  font-family: 'Open Sans', sans-serif;
  font-size: 11px;
  font-weight: 600;
}

.doc-tab svg {
  width: 7px;
  height: 7px;
}

.stage {
  flex: 1;
  display: flex;
}

.pasteboard {
  flex: 1;
  display: flex;
  align-items: center;
  justify-content: center;
  background: #282828;
}

.artboard {
  width: 90%;
  aspect-ratio: 16 / 9;
  background: #fff;
}

.scroll-v {
  width: 17px;
  background: #4a4a4a;
  border-right: 1px solid var(--line);
}

.status {
  display: flex;
  align-items: center;
  height: 17px;
  border-bottom: 1px solid var(--line);
  background: #4a4a4a;
}

.zoom {
  width: 48px;
  padding-left: 6px;
}

.info {
  display: flex;
  align-items: center;
  justify-content: space-between;
  width: 184px;
  padding: 0 6px 0 26px;
  background: var(--bg);
}

.info svg {
  width: 6px;
  height: 10px;
}

/* tabs */

.tabs {
  display: flex;
  height: 28px;
  background: var(--dark);
}

.tab {
  padding: 0 8px 2px;
  border: solid var(--line);
  border-width: 0 1px 1px 0;
  color: var(--dim);
  font-family: 'Open Sans', sans-serif;
  font-weight: 600;
}

.tab.on {
  border-bottom-color: var(--bg);
  background: var(--bg);
  color: #fff;
}

.tab-tools {
  flex: 1;
  display: flex;
  align-items: center;
  justify-content: flex-end;
  gap: 6px;
  padding-right: 5px;
  border-bottom: 1px solid var(--line);
}

.bar {
  width: 1px;
  height: 12px;
  background: #aaa;
}

/* floating brush window */

.brush-window {
  position: absolute;
  top: 9px;
  right: -1px;
  width: 444px;
  border: solid var(--line);
  border-width: 4px 1px 1px;
  background: var(--bg);
  box-shadow: -2px 2px 5px rgba(0, 0, 0, .3);
}

.brush-body {
  display: flex;
  height: 577px;
  padding: 11px 0 0 5px;
}

.brush-left {
  width: 142px;
}

.btn {
  width: 50px;
  height: 22px;
  margin: 0 auto;
  border: 1px solid #666;
  border-radius: 2px;
  background: #454545;
}

.brush-left .btn {
  margin-left: 45px;
}

.features {
  margin-top: 9px;
  border: 1px solid #464646;
}

.features h3 {
  height: 20px;
  background: #6a6a6a;
  font-size: 10px;
  font-weight: normal;
  line-height: 20px;
  text-align: center;
}

.feature {
  display: flex;
  align-items: center;
  justify-content: space-between;
  height: 19px;
  padding: 0 5px 0 11px;
}

.feature.line {
  border-bottom: 1px solid #464646;
}

.feature .lock {
  margin-bottom: 2px;
}

.feature label, .flips label, .setting label {
  display: flex;
  align-items: center;
  white-space: nowrap;
}

.brush-right {
  flex: 1;
  padding: 0 5px 0 10px;
}

.tips {
  height: 313px;
  margin-right: 1px;
  padding: 1px 15px 0 1px;
  border: solid #444;
  border-width: 1px 0 0 1px;
  background: #4d4d4d;
}

.tip-grid {
  display: grid;
  grid-template-columns: repeat(8, 32px);
}

.tip {
  flex-direction: column;
  justify-content: flex-start;
  height: 32px;
  border: solid #434343;
  border-width: 0 1px 1px 0;
  line-height: 10px;
}

.tip svg {
  width: 28px;
  height: 20px;
  color: #f4f4f4;
}

.tip.picked {
  outline: 2px solid #36a9e0;
  outline-offset: -2px;
}

.setting {
  display: flex;
  align-items: center;
  justify-content: space-between;
  height: 18px;
  margin-top: 8px;
}

.setting.first {
  margin-top: 9px;
}

.setting .field {
  margin-right: 1px;
}

.setting .wide {
  width: 56px;
}

.setting.gap {
  margin-top: 4px;
}

.slider {
  display: block;
  width: 285px;
  height: 14px;
  margin: 7px 0 0 -3px;
  appearance: none;
  background: none;
}

.first + .slider {
  margin-top: 9px;
}

.slider::-webkit-slider-runnable-track {
  height: 14px;
  background: linear-gradient(#777, #777) center top / calc(100% - 10px) 3px no-repeat;
}

.slider::-webkit-slider-thumb {
  appearance: none;
  width: 11px;
  height: 10px;
  margin-top: 3px;
  background: #f4f4f4;
  clip-path: polygon(50% 0, 100% 60%, 100% 100%, 0 100%, 0 60%);
}

.shape {
  display: flex;
  justify-content: space-between;
  margin: 3px -3px 0 0;
}

.flips {
  display: flex;
  gap: 10px;
  height: 23px;
}

.angle-row {
  display: flex;
  align-items: center;
  justify-content: flex-end;
  gap: 7px;
  margin-top: 8px;
  padding-right: 1px;
}

.dial {
  width: 76px;
  height: 76px;
}

.shape + .setting {
  margin-top: 5px;
}

.preview {
  margin: 0 4px;
  border: 1px solid #444;
  background: #757575;
}

.preview svg {
  width: 100%;
  height: 100px;
}

.brush-foot {
  display: flex;
  align-items: center;
  justify-content: flex-end;
  height: 26px;
  margin-top: 4px;
  padding-right: 28px;
  border: solid var(--line);
  border-width: 1px 0 2px;
}

.resize {
  height: 7px;
  padding-top: 1px;
}

/* docks */

.dock {
  display: flex;
  flex-direction: column;
  border-left: 1px solid var(--line);
  border-bottom: 1px solid var(--line);
}

.dock-icons {
  width: 39px;
}

.dock-group {
  display: flex;
  flex-direction: column;
  align-items: center;
  height: 70px;
  padding-top: 3px;
  border-bottom: 1px solid var(--line);
}

.dock-group .grip {
  margin: 0 auto;
}

.dock-group button {
  width: 28px;
  height: 24px;
  margin-top: 4px;
}

.pressed {
  border: 1px solid #636363;
  border-radius: 3px;
  background: #363636;
}

.dock-main {
  width: 288px;
  border-left-width: 3px;
  border-right: 1px solid var(--line);
}

.dock-side {
  width: 113px;
  border-left-width: 2px;
  border-right: 1px solid var(--line);
}

.panel {
  border-bottom: 3px solid var(--line);
}

.picker {
  display: flex;
  height: 242px;
  padding: 7px 16px 21px 8px;
}

.picker .swatches {
  margin-top: 2px;
}

.field-2d {
  display: flex;
  align-items: flex-end;
  width: 187px;
  margin-left: 7px;
  background: linear-gradient(to top, #000, transparent), linear-gradient(to right, #fff, #ff1e00);
}

.ring {
  width: 6px;
  height: 6px;
}

.hue-pointer {
  width: 8px;
  height: 214px;
  margin: 0 2px 0 7px;
  appearance: none;
  background: none;
  writing-mode: vertical-lr;
  direction: rtl;
}

.hue-pointer::-webkit-slider-thumb {
  appearance: none;
  width: 8px;
  height: 8px;
  background: #eee;
  clip-path: polygon(0 0, 50% 0, 100% 50%, 50% 100%, 0 100%);
}

.hue {
  width: 19px;
  background: linear-gradient(#f00, #f0f, #00f, #0ff, #0f0, #ff0, #f00);
}

.props-panel {
  height: 248px;
}

.props-head {
  display: flex;
  align-items: center;
  gap: 5px;
  height: 34px;
  padding: 0 10px;
  border-bottom: 1px solid var(--line);
}

.tile {
  display: flex;
  align-items: center;
  justify-content: center;
  width: 24px;
  height: 24px;
  border: 1px solid #636363;
  border-radius: 3px;
  background: #363636;
}

.page {
  width: 12px;
  height: 14px;
}

.props-scroll {
  display: flex;
  height: 158px;
}

.props {
  flex: 1;
  padding: 8px 0 0 6px;
}

.props h3 {
  display: flex;
  align-items: center;
  gap: 7px;
  font-size: 10px;
  color: #f4f4f4;
}

.dims {
  display: grid;
  grid-template-columns: 14px 30px 53px 20px 53px;
  align-items: center;
  gap: 7px 4px;
  margin: 9px 0 0 9px;
}

.dims label {
  text-align: right;
  padding-right: 3px;
}

.dims .field {
  width: 53px;
}

.chain {
  grid-row: span 2;
  justify-self: end;
  width: 10px;
  height: 16px;
}

.orient {
  display: flex;
  gap: 7px;
  margin: 10px 0 0 67px;
}

.orient .pressed {
  width: 25px;
  height: 25px;
}

.res {
  margin: 11px 0 0 62px;
}

.modus {
  margin: 11px 0 0 25px;
}

.scrollbar {
  display: flex;
  flex-direction: column;
  align-items: center;
  width: 16px;
  padding: 5px 0;
  background: #4a4a4a;
  color: var(--dim);
}

.scrollbar i {
  width: 12px;
  height: 42px;
  margin: 2px 0 auto;
  background: #696969;
}

.up {
  transform: rotate(180deg);
}

.layers-panel {
  flex: 1;
  display: flex;
  flex-direction: column;
  border-bottom: none;
}

.lrow {
  display: flex;
  align-items: center;
  height: 28px;
  padding: 0 21px 0 3px;
  border-bottom: 1px solid var(--line);
  color: #8e8e8e;
}

.tabs + .lrow {
  height: 32px;
  padding-top: 5px;
}

.lrow .select, .lrow .combo, .lrow .combo button {
  border-color: #616161;
  background: none;
}

.lrow .chev {
  opacity: .6;
}

.lrow .select {
  height: 21px;
}

.lrow.plain {
  height: 30px;
  border: none;
}

.lrow label {
  margin: 0 4px 0 auto;
}

.lrow .combo input {
  color: #7a7a7a;
  background: #4a4a4a;
}

.kind {
  width: 90px;
  padding-left: 8px;
}

.blend {
  width: 149px;
  padding-left: 4px;
}

.filters {
  display: flex;
  align-items: center;
  gap: 12px;
  margin-left: 26px;
  color: #a6a6a6;
}

.toggle {
  width: 8px;
  height: 17px;
  margin-left: auto;
  border-radius: 4px;
  background: radial-gradient(circle at 4px 4px, #a0a0a0 4px, #494949 5px);
}

.fix {
  padding-left: 3px;
}

.locks {
  display: flex;
  align-items: center;
  gap: 9px;
  margin-left: 8px;
  color: #a6a6a6;
}

.layers {
  flex: 1;
  display: flex;
}

.layer-list {
  flex: 1;
  background: #4d4d4d;
}

.layer-scroll {
  width: 16px;
  background: #4a4a4a;
}

.layer {
  display: flex;
  height: 28px;
  border-bottom: 1px solid var(--line);
}

.vis {
  width: 30px;
  background: var(--bg);
}

.vis svg {
  width: 13px;
  height: 10px;
}

.layer-main {
  flex: 1;
  display: flex;
  align-items: center;
  gap: 10px;
  padding: 0 15px 0 4px;
  background: #6a6a6a;
  color: #fff;
}

.thumb {
  width: 32px;
  height: 19px;
  border: 1px solid #222;
  background: #fff;
}

.layer-main .lock {
  margin-left: auto;
}

.layer-foot {
  display: flex;
  align-items: center;
  justify-content: flex-end;
  gap: 9px;
  height: 25px;
  padding: 0 25px 2px 0;
  border-top: 1px solid var(--line);
}

.layer-foot button {
  width: 18px;
}

.dim {
  color: var(--dim);
}

.fx {
  font-family: 'Liberation Serif', serif;
  font-size: 14px;
  font-style: italic;
}

.side-item {
  height: 41px;
  padding-top: 3px;
  border-bottom: 1px solid var(--line);
  font-family: 'Open Sans', sans-serif;
  font-weight: bold;
}

.side-item button {
  gap: 9px;
  height: 20px;
  margin: 6px 0 0 8px;
}

/* taskbar */

.taskbar {
  display: flex;
  height: 40px;
  background: #1d1e21;
  color: #fff;
  font-family: 'Open Sans', sans-serif;
}

.start {
  width: 48px;
}

.start svg, .find svg {
  width: 16px;
  height: 16px;
}

.find {
  display: flex;
  align-items: center;
  gap: 11px;
  width: 344px;
  padding-left: 12px;
  border: 1px solid #c4c4c4;
  background: #f2f2f2;
  color: #222;
}

.find input {
  flex: 1;
  padding: 0;
  border: none;
  background: none;
  font-size: 14px;
}

.find input::placeholder {
  color: #333;
}

.apps {
  display: flex;
}

.apps button {
  width: 49px;
  border: solid transparent;
  border-width: 2px 0;
}

.apps svg {
  width: 24px;
  height: 24px;
}

.apps .ps {
  fill: #31a8ff;
  font-weight: bold;
}

.apps .current {
  background: #505256;
  border-bottom-color: #76b9ed;
}

.apps .running {
  border-bottom-color: #76b9ed;
}

.tray {
  display: flex;
  align-items: center;
  gap: 8px;
  margin-left: auto;
  padding-right: 15px;
}

.tray svg {
  width: 16px;
  height: 16px;
}

.tray .far {
  margin-left: 4px;
}

.clock {
  width: 66px;
  font-size: 11px;
  line-height: 18px;
  text-align: center;
}

.clock time {
  display: block;
}

.notes {
  margin-left: 4px;
}

.tray .notes svg {
  width: 26px;
  height: 26px;
}
```
